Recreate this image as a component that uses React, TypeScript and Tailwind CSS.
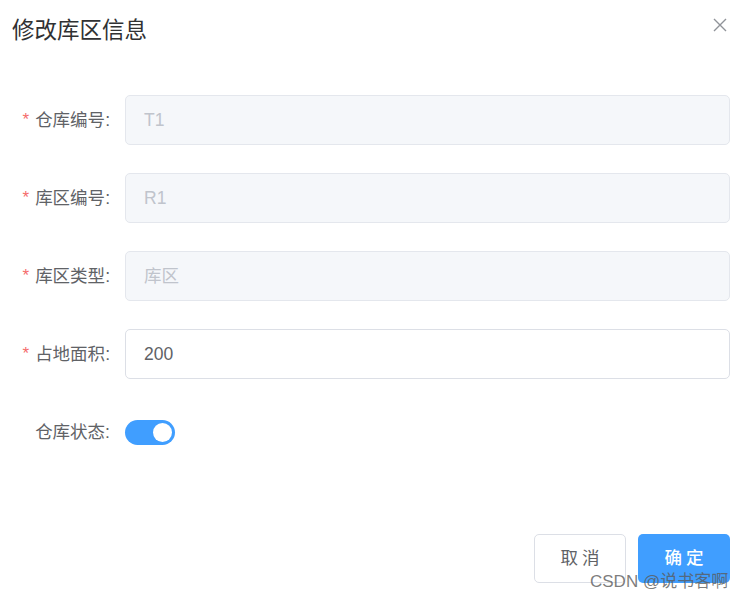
import React from "react";

const font = { fontFamily: '"Liberation Sans", "Noto Sans CJK SC", sans-serif' };

function Row({
  label,
  required,
  value,
  disabled,
}: {
  label: string;
  required?: boolean;
  value: string;
  disabled?: boolean;
}) {
  return (
    <div className="flex items-center h-[50px]">
      <div className="w-[125px] shrink-0 pr-[15px] flex justify-end items-center text-[17.5px] text-[#606266]">
        {required && <span className="text-[#f56c6c] mr-[6px] text-[17px]">*</span>}
        <span>{label}:</span>
      </div>
      <div
        className={
          "flex-1 h-[50px] rounded-[5px] border flex items-center px-[18px] text-[17.5px] " +
          (disabled
            ? "bg-[#f5f7fa] border-[#e4e7ed] text-[#c0c4cc]"
            : "bg-white border-[#dcdfe6] text-[#606266]")
        }
      >
        {value}
      </div>
    </div>
  );
}

export default function App() {
  return (
    <div className="w-[742px] h-[599px] bg-white relative overflow-hidden" style={font}>
      <div className="flex items-start justify-between pl-[12px] pr-[15px] pt-[18px]">
        <div className="text-[22.5px] leading-[26px] text-[#303133]">修改库区信息</div>
        <svg width="14" height="14" viewBox="0 0 14 14" className="mt-[0px]">
          <path d="M1 1 L13 13 M13 1 L1 13" stroke="#909399" strokeWidth="1.4" fill="none" />
        </svg>
      </div>

      <div className="flex flex-col gap-[28px] pr-[12px] mt-[51px]">
        <Row label="仓库编号" required value="T1" disabled />
        <Row label="库区编号" required value="R1" disabled />
        <Row label="库区类型" required value="库区" disabled />
        <Row label="占地面积" required value="200" />
        <div className="flex items-center h-[49px] mt-[-6px] pt-[14px]">
          <div className="w-[125px] shrink-0 pr-[15px] text-right text-[17.5px] text-[#606266]">仓库状态:</div>
          <div className="w-[50px] h-[25px] rounded-full bg-[#409eff] flex items-center justify-end pr-[3px]">
            <div className="w-[19px] h-[19px] rounded-full bg-white" />
          </div>
        </div>
      </div>

      <div className="flex justify-end gap-[12px] pr-[12px] mt-[84px]">
        <div className="w-[92px] h-[49px] rounded-[5px] border border-[#dcdfe6] bg-white flex items-center justify-center text-[17.5px] text-[#606266] tracking-[4px] pl-[4px]">
          取消
        </div>
        <div className="w-[92px] h-[49px] rounded-[5px] bg-[#409eff] flex items-center justify-center text-[17.5px] text-white font-medium tracking-[4px] pl-[4px]">
          确定
        </div>
      </div>

      <div className="absolute left-[590px] top-[571px] text-[17px] leading-[22px] text-[#5a5a5a]/80 whitespace-nowrap">
        CSDN @说书客啊
      </div>
    </div>
  );
}
